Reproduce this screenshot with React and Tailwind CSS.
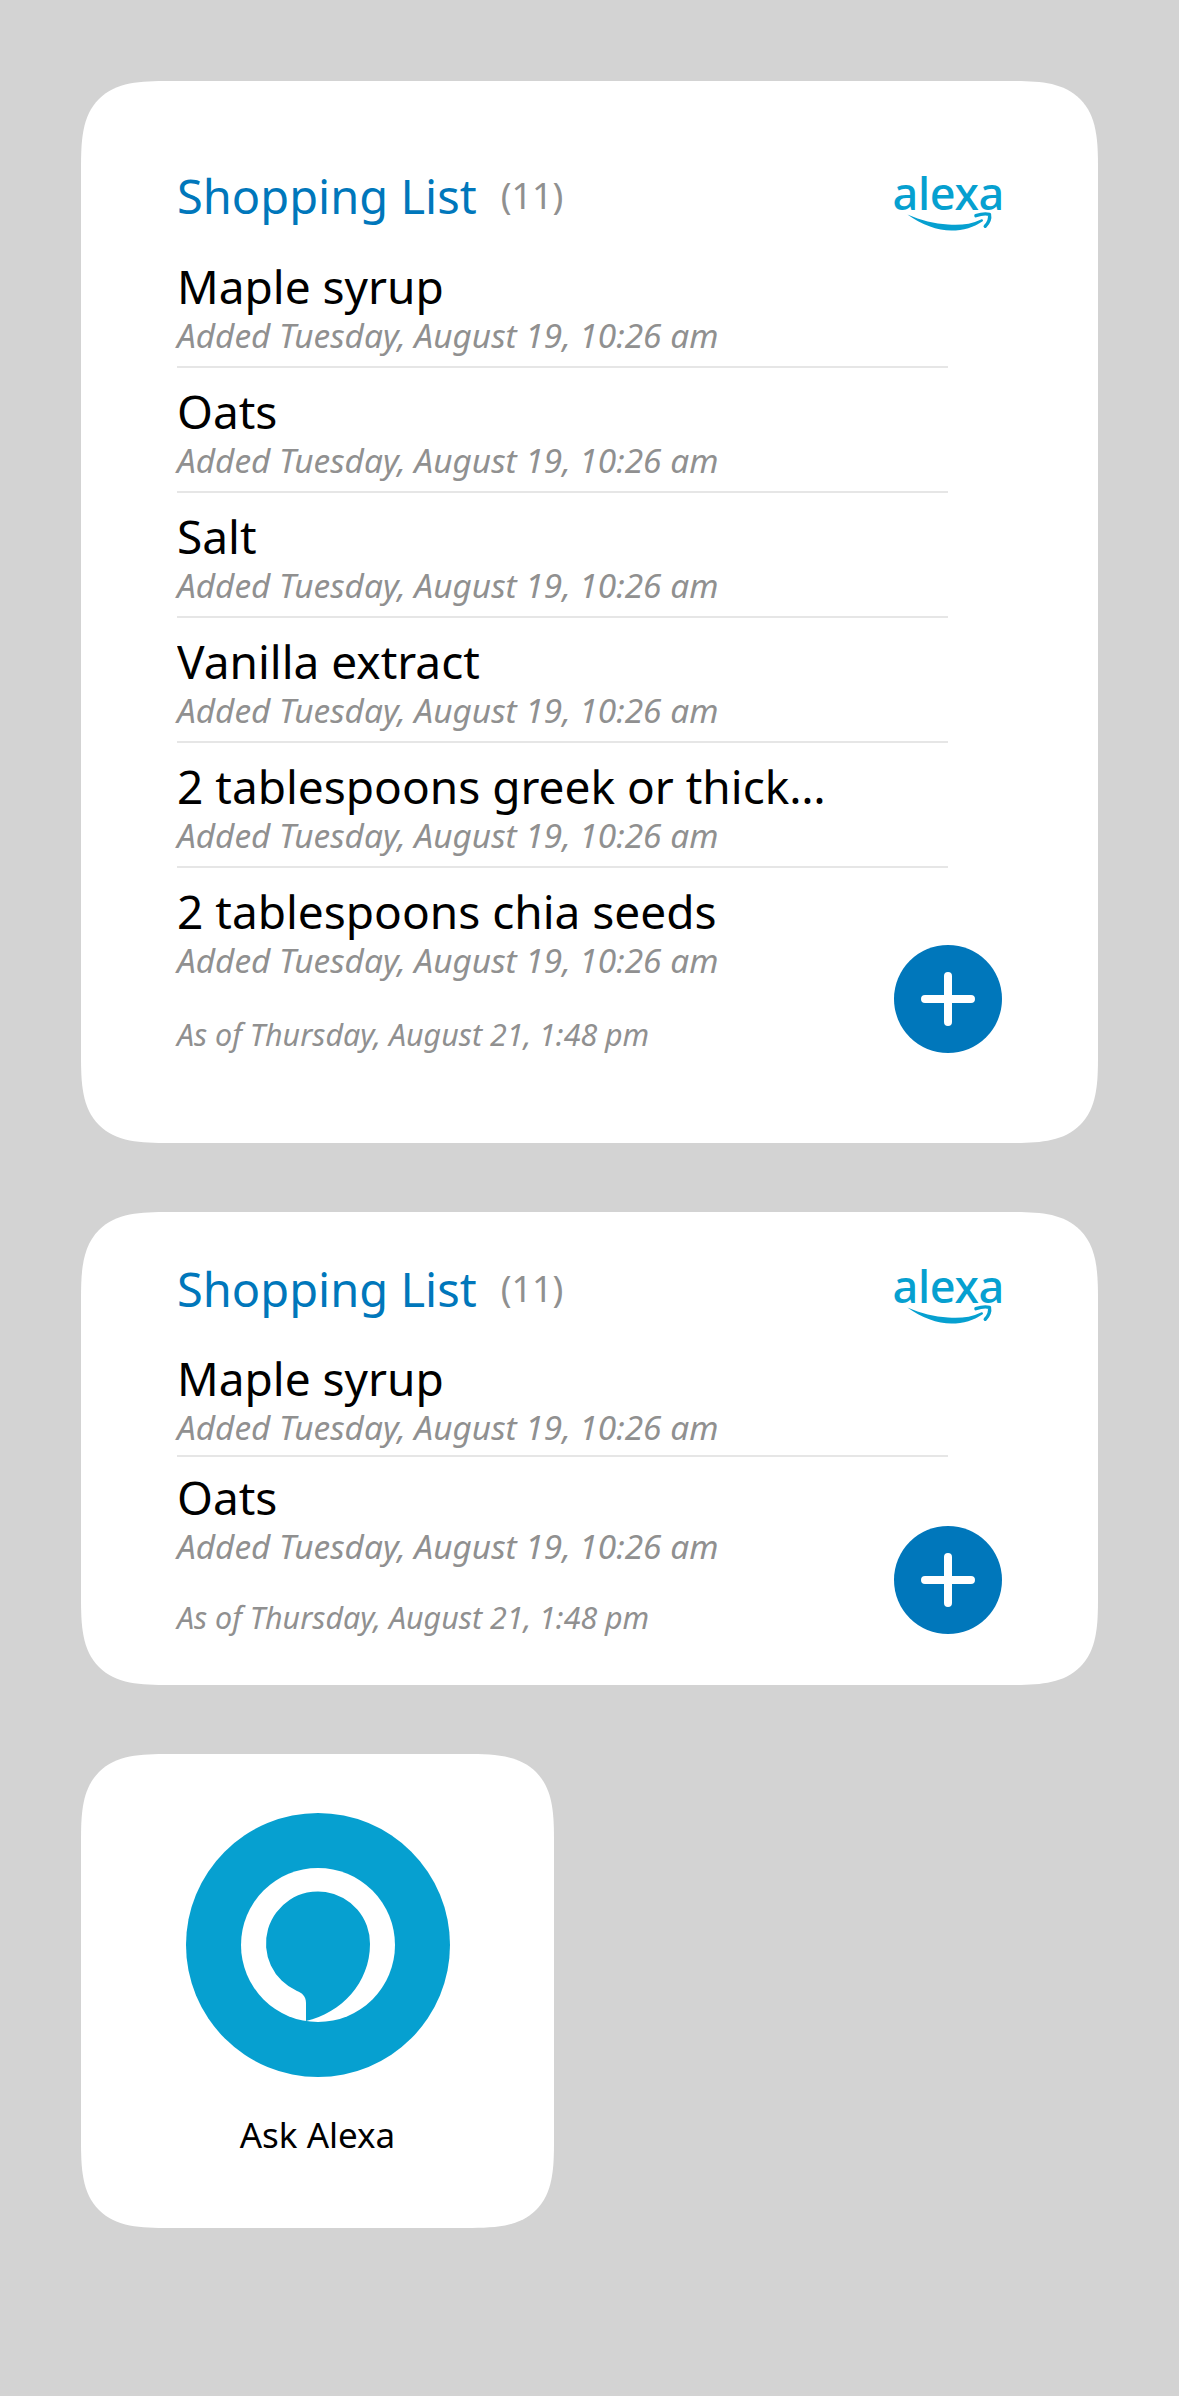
const FONT = "font-['Noto_Sans',sans-serif]";

function AlexaLogo() {
  return (
    <div className="flex flex-col items-end w-[108px] h-[62px] mt-[8px] overflow-visible">
      <span className="text-[#06a0d0] text-[45px] leading-[44px] font-medium tracking-[-0.3px] -mr-[2px]">alexa</span>
      <svg width="108" height="26" viewBox="0 0 108 26" className="-mt-[4px]" fill="none">
        <path d="M6 4C22 16 42 23 58 23C72 23 85 19 95 12C96 11 95 9 93 10C81 16 68 17 54 16C38 15 22 11 6 4Z" fill="#06a0d0" />
        <path d="M87 5.5C93 3.5 99 3 103 4C104 9 102 14 98 18" stroke="#06a0d0" strokeWidth="4" strokeLinecap="round" strokeLinejoin="round" />
      </svg>
    </div>
  );
}

function PlusButton({ className }) {
  return (
    <button className={`absolute right-[96px] w-[108px] h-[108px] rounded-full bg-[#0077bb] flex items-center justify-center ${className}`}>
      <svg width="54" height="54" viewBox="0 0 54 54" fill="none">
        <path d="M27 4V50M4 27H50" stroke="white" strokeWidth="8" strokeLinecap="round" />
      </svg>
    </button>
  );
}

function Item({ nombre, ultimo, compacto }) {
  return (
    <div className={`${ultimo ? "" : "border-b-2 border-[#e6e6e6]"} ${compacto ? "h-[119px]" : "h-[125px]"}`}>
      <div className={`text-black text-[46px] leading-[60px] truncate ${compacto ? "pt-[10px] h-[70px]" : "pt-[13px] h-[73px]"}`}>{nombre}</div>
      <div className="text-[#909090] text-[33.4px] leading-[38px] italic">Added Tuesday, August 19, 10:26 am</div>
    </div>
  );
}

function ListCard({ items, compacto }) {
  return (
    <div className={`relative bg-white rounded-[88px] [corner-shape:superellipse(1.6)] pl-[96px] w-[1017px] ${compacto ? "h-[473px] pt-[44px]" : "h-[1062px] pt-[82px]"}`}>
      <div className="flex items-start justify-between pr-[96px] w-full h-[68px]">
        <div className="flex items-center gap-[24px]">
          <span className="text-[#0077bb] text-[47px] leading-[66px]">Shopping List</span>
          <span className="text-[#909090] text-[36px] leading-[66px]">(11)</span>
        </div>
        <AlexaLogo />
      </div>
      <div className={`w-[771px] ${compacto ? "mt-[14px]" : "mt-[12px]"}`}>
        {items.map((nombre, i) => (
          <Item key={nombre} nombre={nombre} compacto={compacto} ultimo={i === items.length - 1} />
        ))}
      </div>
      <div className="text-[#909090] text-[30.4px] leading-[40px] italic mt-[22px]">As of Thursday, August 21, 1:48 pm</div>
      <PlusButton className={compacto ? "bottom-[51px]" : "bottom-[90px]"} />
    </div>
  );
}

function AskAlexa() {
  return (
    <div className="bg-white rounded-[88px] [corner-shape:superellipse(1.6)] w-[473px] h-[474px] flex flex-col items-center pt-[59px]">
      <svg width="264" height="264" viewBox="0 0 264 264">
        <circle cx="132" cy="132" r="132" fill="#06a0d0" />
        <circle cx="132" cy="132" r="77" fill="white" />
        <path d="M120 208V190C120 183 116 180 111 178A52 52 0 1 1 184 131C184 170 155 200 120 208Z" fill="#06a0d0" />
      </svg>
      <span className="text-black text-[35px] leading-[44px] mt-[36px]">Ask Alexa</span>
    </div>
  );
}

export default function App() {
  return (
    <div className={`${FONT} bg-[#d3d3d3] w-[1179px] h-[2396px] pl-[81px] pt-[81px] flex flex-col gap-[69px]`}>
      <ListCard
        items={[
          "Maple syrup",
          "Oats",
          "Salt",
          "Vanilla extract",
          "2 tablespoons greek or thick…",
          "2 tablespoons chia seeds",
        ]}
      />
      <ListCard compacto items={["Maple syrup", "Oats"]} />
      <AskAlexa />
    </div>
  );
}
